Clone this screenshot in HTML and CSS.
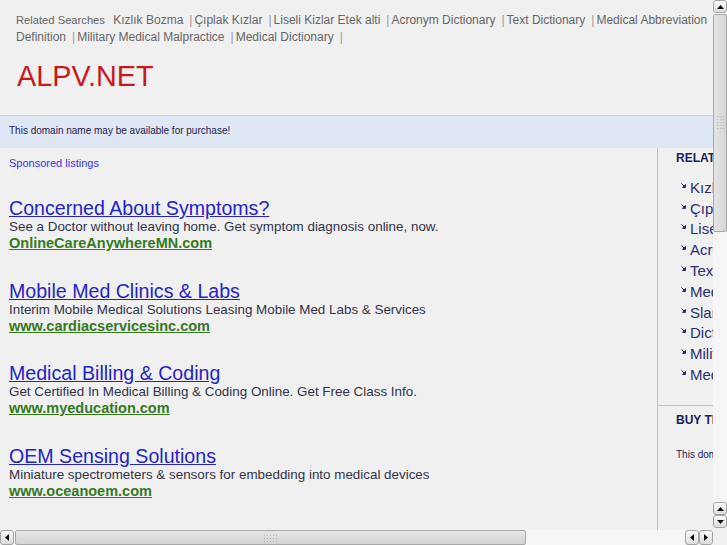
FILE: index.html
```html
<!DOCTYPE html>
<html>
<head>
<meta charset="utf-8">
<title>alpv.net</title>
<link rel="stylesheet" href="styles.css">
</head>
<body>
<div class="page">
  <header class="header">
    <div class="related">
      <span class="rel-label">Related Searches</span>
      <a href="#">Kızlık Bozma</a><span class="sep">|</span><a href="#">Çıplak Kızlar</a><span class="sep">|</span><a href="#">Liseli Kizlar Etek alti</a><span class="sep">|</span><a href="#">Acronym Dictionary</a><span class="sep">|</span><a href="#">Text Dictionary</a><span class="sep">|</span><a href="#">Medical Abbreviation Definition</a><span class="sep">|</span><a href="#">Military Medical Malpractice</a><span class="sep">|</span><a href="#">Medical Dictionary</a><span class="sep">|</span>
    </div>
    <h1 class="logo">ALPV.NET</h1>
  </header>
  <div class="banner">This domain name may be available for purchase!</div>
  <div class="columns">
    <main class="main">
      <div class="sponsored">Sponsored listings</div>
      <div class="ad">
        <a class="ad-title" href="#">Concerned About Symptoms?</a>
        <div class="ad-desc">See a Doctor without leaving home. Get symptom diagnosis online, now.</div>
        <a class="ad-url" href="#">OnlineCareAnywhereMN.com</a>
      </div>
      <div class="ad">
        <a class="ad-title" href="#">Mobile Med Clinics &amp; Labs</a>
        <div class="ad-desc">Interim Mobile Medical Solutions Leasing Mobile Med Labs &amp; Services</div>
        <a class="ad-url" href="#">www.cardiacservicesinc.com</a>
      </div>
      <div class="ad">
        <a class="ad-title" href="#">Medical Billing &amp; Coding</a>
        <div class="ad-desc">Get Certified In Medical Billing &amp; Coding Online. Get Free Class Info.</div>
        <a class="ad-url" href="#">www.myeducation.com</a>
      </div>
      <div class="ad">
        <a class="ad-title" href="#">OEM Sensing Solutions</a>
        <div class="ad-desc">Miniature spectrometers &amp; sensors for embedding into medical devices</div>
        <a class="ad-url" href="#">www.oceanoem.com</a>
      </div>
    </main>
    <aside class="side">
      <section class="side-block">
        <h2 class="side-title">RELATED SEARCHES</h2>
        <ul class="side-list">
          <li><svg class="arr" viewBox="0 0 6 6"><path d="M0.5 0.5L4.2 4.2M5.3 1.8V5.3H1.8Z" stroke="#1e2a6e" stroke-width="1.2" fill="#1e2a6e"/></svg><a href="#">Kızlık Bozma</a></li>
          <li><svg class="arr" viewBox="0 0 6 6"><path d="M0.5 0.5L4.2 4.2M5.3 1.8V5.3H1.8Z" stroke="#1e2a6e" stroke-width="1.2" fill="#1e2a6e"/></svg><a href="#">Çıplak Kızlar</a></li>
          <li><svg class="arr" viewBox="0 0 6 6"><path d="M0.5 0.5L4.2 4.2M5.3 1.8V5.3H1.8Z" stroke="#1e2a6e" stroke-width="1.2" fill="#1e2a6e"/></svg><a href="#">Liseli Kizlar Etek alti</a></li>
          <li><svg class="arr" viewBox="0 0 6 6"><path d="M0.5 0.5L4.2 4.2M5.3 1.8V5.3H1.8Z" stroke="#1e2a6e" stroke-width="1.2" fill="#1e2a6e"/></svg><a href="#">Acronym Dictionary</a></li>
          <li><svg class="arr" viewBox="0 0 6 6"><path d="M0.5 0.5L4.2 4.2M5.3 1.8V5.3H1.8Z" stroke="#1e2a6e" stroke-width="1.2" fill="#1e2a6e"/></svg><a href="#">Text Dictionary</a></li>
          <li><svg class="arr" viewBox="0 0 6 6"><path d="M0.5 0.5L4.2 4.2M5.3 1.8V5.3H1.8Z" stroke="#1e2a6e" stroke-width="1.2" fill="#1e2a6e"/></svg><a href="#">Medical Abbreviation Definition</a></li>
          <li><svg class="arr" viewBox="0 0 6 6"><path d="M0.5 0.5L4.2 4.2M5.3 1.8V5.3H1.8Z" stroke="#1e2a6e" stroke-width="1.2" fill="#1e2a6e"/></svg><a href="#">Slang Dictionary</a></li>
          <li><svg class="arr" viewBox="0 0 6 6"><path d="M0.5 0.5L4.2 4.2M5.3 1.8V5.3H1.8Z" stroke="#1e2a6e" stroke-width="1.2" fill="#1e2a6e"/></svg><a href="#">Dictionary</a></li>
          <li><svg class="arr" viewBox="0 0 6 6"><path d="M0.5 0.5L4.2 4.2M5.3 1.8V5.3H1.8Z" stroke="#1e2a6e" stroke-width="1.2" fill="#1e2a6e"/></svg><a href="#">Military Medical Malpractice</a></li>
          <li><svg class="arr" viewBox="0 0 6 6"><path d="M0.5 0.5L4.2 4.2M5.3 1.8V5.3H1.8Z" stroke="#1e2a6e" stroke-width="1.2" fill="#1e2a6e"/></svg><a href="#">Medical Dictionary</a></li>
        </ul>
      </section>
      <section class="side-block buy">
        <h2 class="side-title">BUY THIS DOMAIN</h2>
        <p class="buy-text">This domain may be for sale. Click here for details.</p>
      </section>
    </aside>
  </div>
</div>

<div class="vscroll">
  <div class="sbtn"><svg viewBox="0 0 7 4"><path d="M0 4L3.5 0L7 4Z" fill="#111"/></svg></div>
  <div class="vthumb"><div class="grip"></div></div>
  <div class="vtrack"></div>
  <div class="sbtn"><svg viewBox="0 0 7 4"><path d="M0 4L3.5 0L7 4Z" fill="#111"/></svg></div>
  <div class="sbtn"><svg viewBox="0 0 7 4"><path d="M0 0L3.5 4L7 0Z" fill="#111"/></svg></div>
</div>
<div class="hscroll">
  <div class="sbtn"><svg class="h" viewBox="0 0 4 7"><path d="M4 0L0 3.5L4 7Z" fill="#111"/></svg></div>
  <div class="hthumb"><div class="grip"></div></div>
  <div class="htrack"></div>
  <div class="sbtn"><svg class="h" viewBox="0 0 4 7"><path d="M4 0L0 3.5L4 7Z" fill="#111"/></svg></div>
  <div class="sbtn"><svg class="h" viewBox="0 0 4 7"><path d="M0 0L4 3.5L0 7Z" fill="#111"/></svg></div>
</div>
<div class="corner"></div>
</body>
</html>
```
FILE: styles.css
```css
html, body {
  margin: 0;
  padding: 0;
  overflow: hidden;
  height: 100%;
}
body {
  background: #f0f0f0;
  font-family: "Liberation Sans", Arial, sans-serif;
  color: #333;
}
a { text-decoration: none; }

.page {
  width: 930px;
}

.header {
  padding: 12px 0 0 16px;
  height: 115px;
  box-sizing: border-box;
}
.related {
  width: 710px;
  font-size: 12px;
  line-height: 17px;
  color: #666;
}
.related a { color: #666; }
.rel-label {
  font-size: 11.2px;
  margin-right: 5px;
}
.sep {
  color: #999;
  margin: 0 2px 0 6px;
}
.logo {
  margin: 13px 0 0 1px;
  font-size: 28.8px;
  line-height: 34px;
  font-weight: normal;
  color: #c8191e;
}

.banner {
  height: 33px;
  box-sizing: border-box;
  border-top: 1px solid #c9d2e4;
  background: #dfe6f4;
  padding: 8px 0 0 9px;
  font-size: 10px;
  line-height: 13px;
  color: #222250;
}

.columns {
  display: flex;
  height: 1100px;
}
.main {
  width: 658px;
  flex: none;
  border-right: 1px solid #aec6ea;
  padding: 9px 0 0 9px;
  box-sizing: border-box;
}
.sponsored {
  font-size: 11px;
  line-height: 13px;
  color: #3434ee;
  margin-bottom: 28px;
}
.ad {
  margin-bottom: 28.5px;
}
.ad-title {
  display: block;
  width: max-content;
  font-size: 19.6px;
  line-height: 20px;
  color: #2424cc;
  text-decoration: underline;
}
.ad-desc {
  font-size: 13.4px;
  line-height: 17px;
  color: #33334a;
}
.ad-url {
  display: block;
  width: max-content;
  font-size: 14.5px;
  line-height: 17px;
  font-weight: bold;
  color: #347a1e;
  text-decoration: underline;
}

.side {
  flex: 1;
}
.side-block {
  padding: 3px 0 0 18px;
}
.side-title {
  margin: 0;
  font-size: 12px;
  line-height: 15px;
  font-weight: bold;
  color: #1a1f5c;
}
.side-list {
  list-style: none;
  margin: 11px 0 0 0;
  padding: 0 0 0 4px;
}
.side-list li {
  display: flex;
  align-items: center;
  height: 20.8px;
  font-size: 15px;
  white-space: nowrap;
}
.side-list a { color: #2a2f72; }
.arr {
  width: 5px;
  height: 5px;
  margin: -4px 4px 0 1px;
}
.buy {
  margin-top: 20px;
  border-top: 1px solid #aec6ea;
  padding-top: 7px;
}
.buy-text {
  margin: 20px 0 0 0;
  font-size: 10px;
  line-height: 13px;
  color: #222250;
  white-space: nowrap;
}

/* fake GTK scrollbars */
.vscroll {
  position: fixed;
  top: 0;
  right: 0;
  width: 14px;
  height: 528px;
  display: flex;
  flex-direction: column;
  background: #f6f6f6;
}
.hscroll {
  position: fixed;
  left: 0;
  bottom: 0;
  width: 713px;
  height: 15px;
  display: flex;
  background: #f6f6f6;
}
.corner {
  position: fixed;
  right: 0;
  bottom: 0;
  width: 14px;
  height: 17px;
  background: #f0f0f0;
}
.sbtn {
  width: 13px;
  height: 13px;
  flex: none;
  border: 1px solid #a4a4a4;
  border-radius: 3px;
  background: linear-gradient(#fbfbfb, #dcdcdc);
  display: flex;
  align-items: center;
  justify-content: center;
  box-sizing: border-box;
}
.vscroll .sbtn { width: 14px; }
.hscroll .sbtn { height: 15px; width: 14px; }
.sbtn svg { width: 7px; height: 4px; }
.sbtn svg.h { width: 4px; height: 7px; }
.vthumb {
  height: 218px;
  flex: none;
  margin-top: 1px;
  border: 1px solid #a8a8a8;
  border-radius: 2px;
  background: linear-gradient(90deg, #e4e4e4, #d6d6d6);
  display: flex;
  align-items: center;
  justify-content: center;
  box-sizing: border-box;
}
.vthumb .grip {
  width: 8px;
  height: 16px;
  background-image: radial-gradient(circle, #b4b4b4 0.8px, transparent 1px);
  background-size: 3px 3px;
}
.vtrack { flex: 1; }
.hthumb {
  width: 511px;
  flex: none;
  margin-left: 1px;
  border: 1px solid #a8a8a8;
  border-radius: 2px;
  background: linear-gradient(#e6e6e6, #d4d4d4);
  display: flex;
  align-items: center;
  justify-content: center;
  box-sizing: border-box;
}
.hthumb .grip {
  width: 16px;
  height: 8px;
  background-image: radial-gradient(circle, #b4b4b4 0.8px, transparent 1px);
  background-size: 3px 3px;
}
.htrack { flex: 1; }
```
